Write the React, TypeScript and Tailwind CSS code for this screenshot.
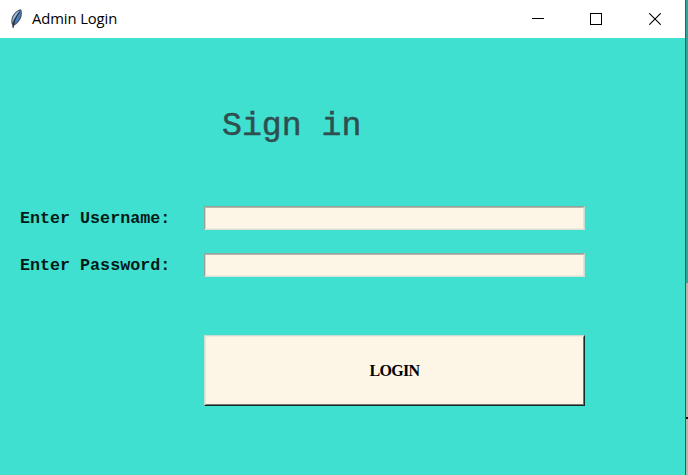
import React from "react";

const mono = "font-['Courier_New','Liberation_Mono',monospace]";

function Feather() {
  return (
    <svg width="14" height="20" viewBox="0 0 14 20" className="shrink-0">
      <path d="M11.9 0.3C8.6 0.8 5 4 3.3 7.6C2 10.8 1.9 13.8 3.2 16.2L4 19.4L5.2 16.4C8 15.2 11 11.8 12.2 8.4C13.2 5.4 13.3 2 11.9 0.3Z" fill="#4a5360" />
      <path d="M10.8 1.6C8.2 2.6 5.4 5.2 4.2 8.2C3.4 10.3 3.1 12 3.5 13.4C5.4 9.4 7.8 5.8 10.8 1.6Z" fill="#9dbbe0" />
      <path d="M11.7 1.6C12.3 4 11.4 7.8 9.8 10.4C8.5 12.5 7 14 5.4 14.7C5.6 10.6 8.8 6.2 11.7 1.6Z" fill="#4780c4" />
      <path d="M10.4 3.6C7.2 7.6 5 11.8 4 18.8" fill="none" stroke="#18202c" strokeWidth="0.8" />
    </svg>
  );
}

function TitleBar() {
  return (
    <header className="flex h-[38px] items-center bg-white pl-[9px] pr-[24px]">
      <Feather />
      <h1 className="ml-[9px] w-[120px] whitespace-nowrap pb-[2px] font-['Segoe_UI','Open_Sans',sans-serif] text-[14.8px] leading-[20px] tracking-[-0.1px] text-black">
        Admin Login
      </h1>
      <div className="ml-auto flex items-center text-black">
        <svg width="12" height="12" shapeRendering="crispEdges">
          <path d="M0 5.5H12" stroke="currentColor" />
        </svg>
        <svg width="12" height="12" shapeRendering="crispEdges" className="ml-[46px]">
          <path d="M.5 .5H11.5V11.5H.5Z" fill="none" stroke="currentColor" />
        </svg>
        <svg width="12" height="12" className="ml-[47px]">
          <path d="M.3 .3L11.7 11.7M11.7 .3L.3 11.7" stroke="currentColor" strokeWidth="1.1" />
        </svg>
      </div>
    </header>
  );
}

function Field({ label, type }: { label: string; type: string }) {
  return (
    <label className="flex h-[24px] items-center">
      <span className={`${mono} w-[184px] whitespace-nowrap pt-[2px] text-[16.7px] font-bold leading-[20px] text-[#031a18]`}>
        {label}
      </span>
      <span className="h-[24px] w-[381px] border border-b-[#d5e2d5] border-l-[#8fa49b] border-r-[#c5ded1] border-t-[#8fa49b]">
        <input
          type={type}
          className="block h-full w-full border border-b-[#f1ebdd] border-l-[#d8d3c5] border-r-[#e3e3d6] border-t-[#b9b5a8] bg-[#fdf5e6] px-1 outline-none"
        />
      </span>
    </label>
  );
}

export default function App() {
  return (
    <div className="flex h-[475px] w-[688px] overflow-hidden bg-[#40e0d0]">
      <main className="w-[685px]">
        <TitleBar />
        <form className="flex flex-col pl-[20px]">
          <h2 className={`${mono} ml-[202px] mt-[68px] h-[40px] whitespace-pre text-[33.2px] leading-[40px] text-[#2f4f4f] [-webkit-text-stroke:0.5px_#2f4f4f]`}>
            Sign in
          </h2>
          <div className="mt-[60px] flex flex-col gap-[23px]">
            <Field label="Enter Username:" type="text" />
            <Field label="Enter Password:" type="password" />
          </div>
          <button
            type="button"
            className="ml-[184px] mt-[58px] h-[71px] w-[381px] border border-b-[#102b28] border-l-[#c9ded2] border-r-[#102b28] border-t-[#c9ded2]"
          >
            <span className="flex h-full w-full items-center justify-center border border-b-[#77736b] border-l-[#ece7dc] border-r-[#77736b] border-t-[#f2eadb] bg-[#fdf5e6] font-['Times_New_Roman','Liberation_Serif',serif] text-[16px] font-bold leading-[20px] tracking-[-0.7px] text-black">
              LOGIN
            </span>
          </button>
        </form>
      </main>
      <aside className="flex w-[3px] flex-col border-l border-[#1b6b64]">
        <div className="h-[283px] bg-[#2aa79b]" />
        <div className="h-[134px] bg-[#bab4a8]" />
        <div className="h-[2px] bg-[#171514]" />
        <div className="flex-1 bg-[#bab4a8]" />
      </aside>
    </div>
  );
}
